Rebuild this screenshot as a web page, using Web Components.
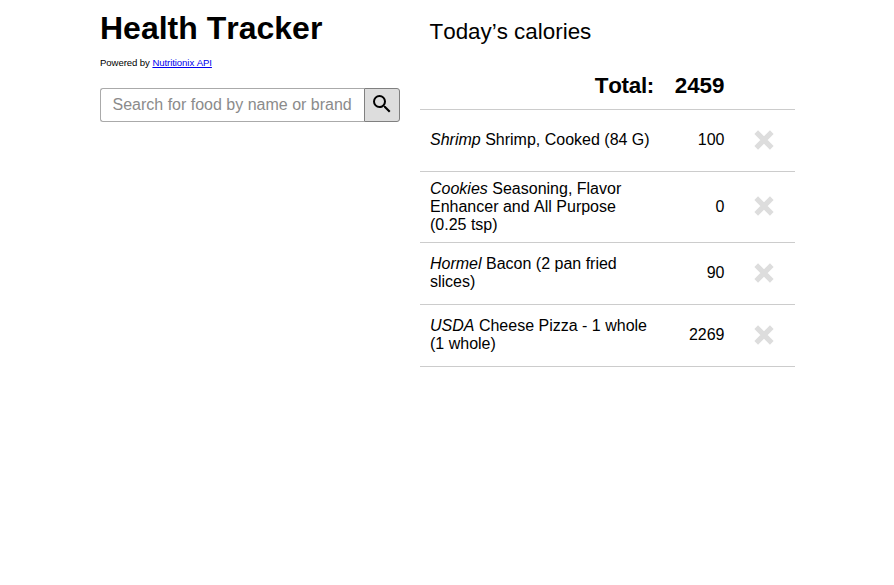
<!DOCTYPE html>
<html lang="en">
<head>
<meta charset="utf-8">
<title>Health Tracker</title>
<style>
body { margin: 0; background: #fff; color: #000; font: 16px/18px "Liberation Sans", Arial, sans-serif; font-kerning: none; }
</style>
</head>
<body>
<health-tracker></health-tracker>
<script>
function define(name, html) {
  const template = document.createElement('template');
  template.innerHTML = html;
  customElements.define(name, class extends HTMLElement {
    constructor() {
      super();
      this.attachShadow({ mode: 'open' }).append(template.content.cloneNode(true));
    }
  });
}

define('app-heading', `
<style>
:host { display: block; }
h1 { margin: 0; padding-top: 10px; font-size: 32px; line-height: 36px; white-space: nowrap; }
p { margin: 11px 0 0; font-size: 9.6px; line-height: 12px; letter-spacing: -.085px; white-space: nowrap; }
a { color: #0000ee; text-decoration: underline; }
</style>
<h1>Health Tracker</h1>
<p>Powered by <a href="#">Nutritionix API</a></p>`);

define('food-search', `
<style>
:host { display: flex; box-sizing: border-box; width: 300px; height: 34px; margin-top: 19px; }
input { box-sizing: border-box; flex: 1; min-width: 0; margin: 0; padding: 0 0 0 11.5px; border: 1px solid #aaa; border-right: 0; border-radius: 3px 0 0 3px; background: #fff; font: inherit; font-kerning: none; outline: 0; }
input::placeholder { color: #8b8b8b; opacity: 1; }
button { box-sizing: border-box; width: 36px; margin: 0; padding: 0 0 2px; border: 1px solid #808080; border-radius: 0 3px 3px 0; background: #ddd; display: grid; place-items: center; }
svg { display: block; }
</style>
<input type="text" placeholder="Search for food by name or brand">
<button aria-label="Search"><svg width="24" height="24" viewBox="0 0 24 24"><path d="M15.5 14h-.79l-.28-.27A6.47 6.47 0 0 0 16 9.5 6.5 6.5 0 1 0 9.5 16c1.61 0 3.09-.59 4.23-1.57l.27.28v.79l5 4.99L20.49 19zm-6 0a4.5 4.5 0 1 1 0-9 4.5 4.5 0 0 1 0 9z"/></svg></button>`);

define('calorie-total', `
<style>
:host { display: grid; grid-template-columns: 234px 70.5px; height: 48px; align-items: center; text-align: right; font-size: 22.4px; line-height: 26px; font-weight: bold; border-bottom: 1px solid #ccc; box-sizing: border-box; }
.label { letter-spacing: -.3px; }
</style>
<span class="label"><slot name="label"></slot></span><span><slot></slot></span>`);

define('food-entry', `
<style>
:host { display: grid; grid-template-columns: 234px 70.5px 1fr; align-items: center; box-sizing: border-box; min-height: 62px; padding: 8px 0; border-bottom: 1px solid #ccc; }
.name { padding: 0 2px 0 10px; }
.name, .amount { margin-top: -.3px; margin-bottom: .3px; }
.amount { text-align: right; }
button { justify-self: center; margin: 0 0 2px 8.5px; padding: 0; border: 0; background: none; }
svg { display: block; }
::slotted(em) { font-style: italic; }
</style>
<div class="name"><slot></slot></div>
<div class="amount"><slot name="calories"></slot></div>
<button aria-label="Remove"><svg width="20" height="20" viewBox="0 0 20 20"><path d="M2.2 2.2l15.6 15.6M17.8 2.2l-15.6 15.6" stroke="#ddd" stroke-width="5.2"/></svg></button>`);

define('calorie-log', `
<style>
:host { display: block; width: 375px; }
h2 { margin: 0; padding: 18px 0 17px 9.5px; font-size: 22.4px; line-height: 27px; font-weight: normal; white-space: nowrap; }
</style>
<h2>Today’s calories</h2>
<calorie-total><span slot="label">Total:</span>2459</calorie-total>
<food-entry><em>Shrimp</em> Shrimp, Cooked (84 G)<span slot="calories">100</span></food-entry>
<food-entry><em>Cookies</em> Seasoning, Flavor Enhancer and All Purpose (0.25 tsp)<span slot="calories">0</span></food-entry>
<food-entry><em>Hormel</em> Bacon (2 pan fried slices)<span slot="calories">90</span></food-entry>
<food-entry><em>USDA</em> Cheese Pizza - 1 whole (1 whole)<span slot="calories">2269</span></food-entry>`);

define('health-tracker', `
<style>
:host { display: flex; gap: 20px; padding-left: 100px; }
section { width: 300px; }
</style>
<section><app-heading></app-heading><food-search></food-search></section>
<calorie-log></calorie-log>`);
</script>
</body>
</html>
